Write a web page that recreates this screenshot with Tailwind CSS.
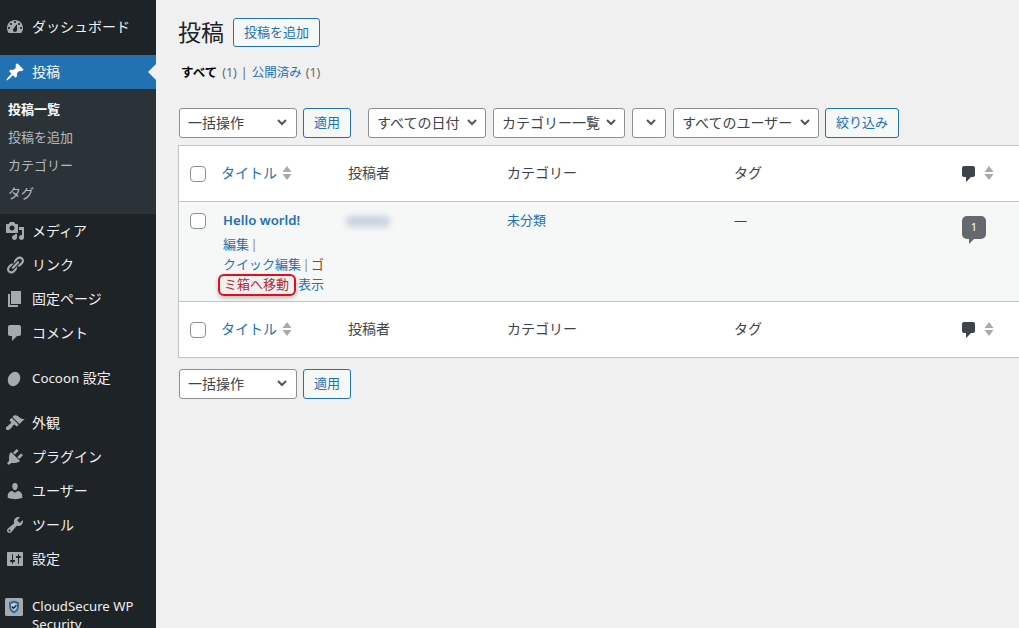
<!DOCTYPE html>
<html lang="ja">
<head>
    <meta charset="UTF-8">
    <title>投稿</title>
    <script src="https://cdn.jsdelivr.net/npm/@tailwindcss/browser@4"></script>
</head>
<body class="h-[628px] w-[1019px] overflow-hidden flex bg-[#f0f0f1] text-[#3c434a] text-[13px] [font-family:'Noto_Sans','Noto_Sans_CJK_JP',sans-serif]">
    <!-- Sidebar -->
    <aside class="w-[156px] h-full shrink-0 bg-[#1d2327] text-[#f0f0f1] text-[14px] pt-[10px]">
        <a class="h-[34px] flex items-center">
            <svg class="w-5 h-5 ml-[5px] mr-[7px] fill-[#a7aaad]" viewBox="0 0 20 20"><path fill-rule="evenodd" d="M3.76 16h12.48c1.1-1.37 1.76-3.11 1.76-5 0-4.42-3.58-8-8-8s-8 3.58-8 8c0 1.89.66 3.63 1.76 5zM10 4c.55 0 1 .45 1 1s-.45 1-1 1-1-.45-1-1 .45-1 1-1zM6 6c.55 0 1 .45 1 1s-.45 1-1 1-1-.45-1-1 .45-1 1-1zm8 0c.55 0 1 .45 1 1s-.45 1-1 1-1-.45-1-1 .45-1 1-1zm-5.37 5.55L12 7v6c0 1.1-.9 2-2 2s-2-.9-2-2c0-.57.24-1.08.63-1.45zM4 10c.55 0 1 .45 1 1s-.45 1-1 1-1-.45-1-1 .45-1 1-1zm12 0c.55 0 1 .45 1 1s-.45 1-1 1-1-.45-1-1 .45-1 1-1z"/></svg>
            <span class="-mt-[2px]">ダッシュボード</span>
        </a>
        <!-- Active menu -->
        <a class="relative h-[34px] mt-[11px] flex items-center bg-[#2271b1] text-white">
            <svg class="w-5 h-5 ml-[5px] mr-[7px] fill-white" viewBox="0 0 20 20"><path d="M10.44 3.02l1.82-1.82 6.36 6.35-1.83 1.82c-1.05-.68-2.48-.57-3.41.36l-.75.75c-.92.93-1.04 2.35-.35 3.41l-1.83 1.82-2.41-2.41-2.8 2.79c-.42.42-3.38 2.71-3.8 2.29s1.86-3.39 2.28-3.81l2.79-2.79L4.1 9.36l1.83-1.82c1.05.69 2.48.57 3.4-.36l.75-.75c.93-.92 1.05-2.35.36-3.41z"/></svg>
            <span class="-mt-[2px]">投稿</span>
            <span class="absolute right-0 top-[9px] border-y-[8px] border-r-[8px] border-y-transparent border-r-[#f0f0f1]"></span>
        </a>
        <div class="bg-[#2c3338] pt-[7px] pb-[6px] pl-[8px] text-[13px] text-[#f0f6fc]/70">
            <a class="h-[28px] flex items-center font-bold text-white">投稿一覧</a>
            <a class="h-[28px] flex items-center">投稿を追加</a>
            <a class="h-[28px] flex items-center">カテゴリー</a>
            <a class="h-[28px] flex items-center">タグ</a>
        </div>
        <a class="h-[34px] flex items-center">
            <svg class="w-5 h-5 ml-[5px] mr-[7px] fill-[#a7aaad]" viewBox="0 0 20 20"><path fill-rule="evenodd" d="M13 11V4c0-.55-.45-1-1-1h-1.67L9 1H5L3.67 3H2c-.55 0-1 .45-1 1v7c0 .55.45 1 1 1h10c.55 0 1-.45 1-1zM7 4.5c1.38 0 2.5 1.12 2.5 2.5S8.38 9.5 7 9.5 4.5 8.38 4.5 7 5.62 4.5 7 4.5zM14 6h5v10.5c0 1.38-1.12 2.5-2.5 2.5S14 17.88 14 16.5s1.12-2.5 2.5-2.5c.17 0 .34.02.5.05V9h-3V6zm-4 8.05V13h2v3.5c0 1.38-1.12 2.5-2.5 2.5S7 17.88 7 16.5 8.12 14 9.5 14c.17 0 .34.02.5.05z"/></svg>
            <span class="-mt-[2px]">メディア</span>
        </a>
        <a class="h-[34px] flex items-center">
            <svg class="w-5 h-5 ml-[5px] mr-[7px] fill-[#a7aaad]" viewBox="0 0 20 20"><path d="M17.74 2.76c1.68 1.69 1.68 4.41 0 6.1l-1.53 1.52c-1.12 1.12-2.7 1.47-4.14 1.09l2.62-2.61.76-.77.76-.76c.84-.84.84-2.2 0-3.04-.84-.85-2.2-.85-3.04 0l-.77.76-3.38 3.38c-.37-1.44-.02-3.02 1.1-4.14l1.52-1.53c1.69-1.68 4.42-1.68 6.1 0zM8.59 13.43l5.34-5.34c.42-.42.42-1.1 0-1.52-.44-.43-1.13-.39-1.53 0l-5.33 5.34c-.42.42-.42 1.1 0 1.52.44.43 1.13.39 1.52 0zm-.76 2.29l4.14-4.15c.38 1.44.03 3.02-1.09 4.14l-1.52 1.53c-1.69 1.68-4.41 1.68-6.1 0-1.68-1.68-1.68-4.42 0-6.1l1.53-1.52c1.12-1.12 2.7-1.47 4.14-1.1l-4.14 4.15c-.85.84-.85 2.2 0 3.05.84.84 2.2.84 3.04 0z"/></svg>
            <span class="-mt-[2px]">リンク</span>
        </a>
        <a class="h-[34px] flex items-center">
            <svg class="w-5 h-5 ml-[5px] mr-[7px] fill-[#a7aaad]" viewBox="0 0 20 20"><path d="M6 15V2h10v13H6zm-1 1h8v2H3V5h2v11z"/></svg>
            <span class="-mt-[2px]">固定ページ</span>
        </a>
        <a class="h-[34px] flex items-center">
            <svg class="w-5 h-5 ml-[5px] mr-[7px] fill-[#a7aaad]" viewBox="0 0 20 20"><path d="M5 2h9c1.1 0 2 .9 2 2v7c0 1.1-.9 2-2 2h-2l-5 5v-5H5c-1.1 0-2-.9-2-2V4c0-1.1.9-2 2-2z"/></svg>
            <span class="-mt-[2px]">コメント</span>
        </a>
        <a class="h-[34px] mt-[12px] flex items-center">
            <svg class="w-5 h-5 ml-[5px] mr-[7px] fill-[#a7aaad]" viewBox="0 0 20 20"><ellipse cx="9" cy="10" rx="6" ry="7.5" transform="rotate(25 9 10)"/></svg>
            <span class="-mt-[2px]"><span class="text-[13.3px]">Cocoon</span> 設定</span>
        </a>
        <a class="h-[34px] mt-[10px] flex items-center">
            <svg class="w-5 h-5 ml-[5px] mr-[7px] fill-[#a7aaad]" viewBox="0 0 20 20"><path d="M14.48 11.06L7.41 3.99l1.5-1.5c.5-.56 2.3-.47 3.51.32 1.21.8 1.43 1.28 2.91 2.1 1.18.64 2.45 1.26 4.45.85zm-.71.71L6.7 4.7 4.93 6.47c-.39.39-.39 1.02 0 1.41l1.06 1.06c.39.39.39 1.03 0 1.42-.6.6-1.43 1.11-2.21 1.69-.35.26-.7.53-1.01.84C1.43 13.23.91 14.4.91 15.5c0 .83.7 1.56 1.53 1.56 1.1 0 2.27-.52 3.61-1.87.3-.3.58-.65.84-1.01.58-.78 1.09-1.61 1.69-2.21.39-.39 1.03-.39 1.42 0l1.06 1.06c.39.39 1.02.39 1.41 0z"/></svg>
            <span class="-mt-[2px]">外観</span>
        </a>
        <a class="h-[34px] flex items-center">
            <svg class="w-5 h-5 ml-[5px] mr-[7px] fill-[#a7aaad]" viewBox="0 0 20 20"><path d="M13.11 4.36L9.87 7.6 8 5.73l3.24-3.24c.35-.34 1.05-.2 1.56.32.52.51.66 1.21.31 1.55zm-8 1.77l.91-1.12 9.01 9.01-1.19.84c-.71.71-2.63 1.16-3.82 1.16H6.14L4.9 17.26c-.59.59-1.54.59-2.12 0-.59-.58-.59-1.53 0-2.12l1.24-1.24v-3.88c0-1.13.4-3.19 1.09-3.89zm7.26 3.97l3.24-3.24c.34-.35 1.04-.21 1.55.31.52.51.66 1.21.31 1.55l-3.24 3.25z"/></svg>
            <span class="-mt-[2px]">プラグイン</span>
        </a>
        <a class="h-[34px] flex items-center">
            <svg class="w-5 h-5 ml-[5px] mr-[7px] fill-[#a7aaad]" viewBox="0 0 20 20"><path d="M10 9.25c-2.27 0-2.73-3.44-2.73-3.44C7 4.02 7.82 2 9.97 2c2.16 0 2.98 2.02 2.71 3.81 0 0-.41 3.44-2.68 3.44zm0 2.57L12.72 10c2.39 0 4.52 2.33 4.52 4.53v2.49s-3.65 1.13-7.24 1.13c-3.65 0-7.24-1.13-7.24-1.13v-2.49c0-2.25 1.94-4.48 4.47-4.48z"/></svg>
            <span class="-mt-[2px]">ユーザー</span>
        </a>
        <a class="h-[34px] flex items-center">
            <svg class="w-5 h-5 ml-[5px] mr-[7px] fill-[#a7aaad]" viewBox="0 0 20 20"><path fill-rule="evenodd" d="M16.68 9.77c-1.34 1.34-3.3 1.67-4.95.99l-5.41 6.52c-.99.99-2.59.99-3.58 0s-.99-2.59 0-3.57l6.52-5.42c-.68-1.65-.35-3.61.99-4.95 1.28-1.28 3.12-1.62 4.72-1.06l-2.89 2.89 2.82 2.82 2.86-2.87c.53 1.58.18 3.39-1.08 4.65zM3.81 16.21c.4.39 1.04.39 1.43 0 .4-.4.4-1.04 0-1.43-.39-.4-1.03-.4-1.43 0-.39.39-.39 1.03 0 1.43z"/></svg>
            <span class="-mt-[2px]">ツール</span>
        </a>
        <a class="h-[34px] flex items-center">
            <svg class="w-5 h-5 ml-[5px] mr-[7px] fill-[#a7aaad]" viewBox="0 0 20 20"><path fill-rule="evenodd" d="M18 16V4c0-.55-.45-1-1-1H3c-.55 0-1 .45-1 1v12c0 .55.45 1 1 1h14c.55 0 1-.45 1-1zM8 11h1c.55 0 1 .45 1 1s-.45 1-1 1H8v1.5c0 .28-.22.5-.5.5s-.5-.22-.5-.5V13H6c-.55 0-1-.45-1-1s.45-1 1-1h1V5.5c0-.28.22-.5.5-.5s.5.22.5.5V11zm5-2h-1c-.55 0-1-.45-1-1s.45-1 1-1h1V5.5c0-.28.22-.5.5-.5s.5.22.5.5V7h1c.55 0 1 .45 1 1s-.45 1-1 1h-1v5.5c0 .28-.22.5-.5.5s-.5-.22-.5-.5V9z"/></svg>
            <span class="-mt-[2px]">設定</span>
        </a>
        <a class="mt-[12px] flex items-start leading-[18px] pt-[9px]">
            <svg class="w-[18px] h-[18px] ml-[5px] mr-[9px] shrink-0 mt-[1px]" viewBox="0 0 18 18"><rect width="18" height="18" rx="1.500" fill="#a7aaad"/><path d="M9 2.500l5 1.800v4.400c0 3-2 5.300-5 6.800-3-1.500-5-3.800-5-6.800V4.300z" fill="#2b6c9e"/><path d="M9 4.800l3 1.100v2.900c0 1.900-1.200 3.300-3 4.300-1.800-1-3-2.400-3-4.300V5.900z" fill="#c4ced6"/><path d="M6.800 8.500l1.700 1.700 3-3" fill="none" stroke="#1d2327" stroke-width="1.500"/></svg>
            <span class="text-[13.2px]">CloudSecure WP Security</span>
        </a>
    </aside>

    <!-- Main -->
    <main class="flex-1 min-w-0 pl-[22px] pt-[18px]">
        <div class="flex items-center h-[29px]">
            <h1 class="text-[23px] font-normal text-[#1d2327] leading-none mr-[9px]">投稿</h1>
            <a class="h-[29px] w-[87px] flex items-center justify-center border border-[#2271b1] rounded-[3px] bg-[#f6f7f7] text-[#2271b1]">投稿を追加</a>
        </div>

        <div class="ml-[3px] mt-[16px] h-[20px] flex items-center text-[12.5px] text-[#646970]">
            <b class="text-black font-bold">すべて</b>
            <span class="ml-[5px]">(1)</span>
            <span class="mx-[4px] text-[#646970]">|</span>
            <a class="text-[#2271b1]">公開済み</a>
            <span class="ml-[4px]">(1)</span>
        </div>

        <!-- Top filters -->
        <div class="ml-px mt-[25px] h-[30px] flex">
            <div class="w-[118px] h-[30px] border border-[#8c8f94] rounded-[3px] bg-white flex items-center justify-between pl-[8px] pr-[8px] pb-[2px] text-[14px]">
                一括操作
                <svg class="w-[12px] h-[12px] fill-none stroke-[#50575e] stroke-2" viewBox="0 0 12 12"><path d="M2 4l4 4 4-4"/></svg>
            </div>
            <a class="ml-[6px] w-[48px] h-[30px] flex items-center justify-center border border-[#2271b1] rounded-[3px] bg-[#f6f7f7] text-[#2271b1]">適用</a>
            <div class="ml-[17px] w-[118px] h-[30px] border border-[#8c8f94] rounded-[3px] bg-white flex items-center justify-between pl-[8px] pr-[7px] pb-[2px] text-[14px]">
                すべての日付
                <svg class="w-[12px] h-[12px] fill-none stroke-[#50575e] stroke-2" viewBox="0 0 12 12"><path d="M2 4l4 4 4-4"/></svg>
            </div>
            <div class="ml-[7px] w-[132px] h-[30px] border border-[#8c8f94] rounded-[3px] bg-white flex items-center justify-between pl-[8px] pr-[7px] pb-[2px] text-[14px]">
                カテゴリー一覧
                <svg class="w-[12px] h-[12px] fill-none stroke-[#50575e] stroke-2" viewBox="0 0 12 12"><path d="M2 4l4 4 4-4"/></svg>
            </div>
            <div class="ml-[7px] w-[34px] h-[30px] border border-[#8c8f94] rounded-[3px] bg-white flex items-center justify-center pl-[4px] pb-[2px]">
                <svg class="w-[12px] h-[12px] fill-none stroke-[#50575e] stroke-2" viewBox="0 0 12 12"><path d="M2 4l4 4 4-4"/></svg>
            </div>
            <div class="ml-[7px] w-[146px] h-[30px] border border-[#8c8f94] rounded-[3px] bg-white flex items-center justify-between pl-[8px] pr-[7px] pb-[2px] text-[14px]">
                すべてのユーザー
                <svg class="w-[12px] h-[12px] fill-none stroke-[#50575e] stroke-2" viewBox="0 0 12 12"><path d="M2 4l4 4 4-4"/></svg>
            </div>
            <a class="ml-[6px] w-[74px] h-[30px] flex items-center justify-center border border-[#2271b1] rounded-[3px] bg-[#f6f7f7] text-[#2271b1]">絞り込み</a>
        </div>

        <!-- Posts table -->
        <div class="mt-[7px] w-[900px] border border-[#c3c4c7] bg-white text-[14px]">
            <div class="h-[56px] flex items-center border-b border-[#c3c4c7]">
                <span class="ml-[11px] w-4 h-4 shrink-0 border border-[#8c8f94] rounded-[4px] bg-white"></span>
                <a class="ml-[15px] -mt-[2px] w-[127px] shrink-0 flex items-center text-[#2271b1]">タイトル
                    <svg class="ml-[5px] w-[10px] h-[16px] fill-[#a7aaad]" viewBox="0 0 10 16"><path d="M5 1l4.500 6h-9zM5 15L.5 9h9z"/></svg>
                </a>
                <span class="-mt-[2px] w-[159px] shrink-0">投稿者</span>
                <span class="-mt-[2px] w-[227px] shrink-0">カテゴリー</span>
                <span class="-mt-[2px] w-[225px] shrink-0">タグ</span>
                <svg class="w-5 h-5 fill-[#3c434a] shrink-0" viewBox="0 0 20 20"><path d="M5 2h9c1.100 0 2 .9 2 2v7c0 1.100-.9 2-2 2h-2l-5 5v-5H5c-1.100 0-2-.9-2-2V4c0-1.100.9-2 2-2z"/></svg>
                <svg class="ml-[5px] -mt-[2px] w-[10px] h-[16px] fill-[#a7aaad] shrink-0" viewBox="0 0 10 16"><path d="M5 1l4.500 6h-9zM5 15L.5 9h9z"/></svg>
            </div>
            <div class="h-[100px] flex items-start border-b border-[#c3c4c7] bg-[#f6f7f7]">
                <span class="ml-[11px] mt-[11px] w-4 h-4 shrink-0 border border-[#8c8f94] rounded-[4px] bg-white"></span>
                <div class="ml-[17px] w-[125px] shrink-0 pt-[8px] text-[13px]">
                    <a class="block h-[20px] leading-[20px] text-[13.2px] font-semibold text-[#2271b1]">Hello world!</a>
                    <div class="mt-[5px] leading-[19.5px] whitespace-nowrap [word-spacing:-2px]">
                        <div><a class="text-[#2271b1]">編集</a> <span class="text-[#8c8f94]">|</span></div>
                        <div><a class="text-[#2271b1]">クイック編集</a> <span class="text-[#8c8f94]">|</span> <a class="text-[#b32d2e]">ゴ</a></div>
                        <div class="flex items-center">
                            <a class="-ml-[5px] h-[22px] w-[78px] pl-[4px] flex items-center border-2 border-[#e0101a] rounded-[6px] bg-[#f0f0f0] text-[#b32d2e] shadow-[0_2px_4px_rgba(0,0,0,0.25)]">ミ箱へ移動</a>
                            <a class="ml-[2px] text-[#2271b1]">表示</a>
                        </div>
                    </div>
                </div>
                <span class="w-[159px] shrink-0 pt-[14px]">
                    <span class="block -ml-[2px] w-[44px] h-[11px] rounded-full bg-[#c6d2de] blur-[3px]"></span>
                </span>
                <a class="w-[227px] shrink-0 pt-[8px] leading-[20px] text-[13px] text-[#2271b1]">未分類</a>
                <span class="w-[228px] shrink-0 pt-[8px] leading-[20px] text-[13px]">—</span>
                <span class="relative mt-[14px] w-[24px] h-[23px] shrink-0 rounded-[5px] bg-[#646970] text-white text-[11px] flex items-center justify-center">1
                    <span class="absolute left-[7px] top-[23px] border-t-[5px] border-r-[5px] border-t-[#646970] border-r-transparent"></span>
                </span>
            </div>
            <div class="h-[55px] flex items-center">
                <span class="ml-[11px] w-4 h-4 shrink-0 border border-[#8c8f94] rounded-[4px] bg-white"></span>
                <a class="ml-[15px] -mt-[2px] w-[127px] shrink-0 flex items-center text-[#2271b1]">タイトル
                    <svg class="ml-[5px] w-[10px] h-[16px] fill-[#a7aaad]" viewBox="0 0 10 16"><path d="M5 1l4.500 6h-9zM5 15L.5 9h9z"/></svg>
                </a>
                <span class="-mt-[2px] w-[159px] shrink-0">投稿者</span>
                <span class="-mt-[2px] w-[227px] shrink-0">カテゴリー</span>
                <span class="-mt-[2px] w-[225px] shrink-0">タグ</span>
                <svg class="w-5 h-5 fill-[#3c434a] shrink-0" viewBox="0 0 20 20"><path d="M5 2h9c1.100 0 2 .9 2 2v7c0 1.100-.9 2-2 2h-2l-5 5v-5H5c-1.100 0-2-.9-2-2V4c0-1.100.9-2 2-2z"/></svg>
                <svg class="ml-[5px] -mt-[2px] w-[10px] h-[16px] fill-[#a7aaad] shrink-0" viewBox="0 0 10 16"><path d="M5 1l4.500 6h-9zM5 15L.5 9h9z"/></svg>
            </div>
        </div>

        <!-- Bottom bulk actions -->
        <div class="ml-px mt-[11px] h-[30px] flex">
            <div class="w-[118px] h-[30px] border border-[#8c8f94] rounded-[3px] bg-white flex items-center justify-between pl-[8px] pr-[8px] pb-[2px] text-[14px]">
                一括操作
                <svg class="w-[12px] h-[12px] fill-none stroke-[#50575e] stroke-2" viewBox="0 0 12 12"><path d="M2 4l4 4 4-4"/></svg>
            </div>
            <a class="ml-[6px] w-[48px] h-[30px] flex items-center justify-center border border-[#2271b1] rounded-[3px] bg-[#f6f7f7] text-[#2271b1]">適用</a>
        </div>
    </main>
</body>
</html>
